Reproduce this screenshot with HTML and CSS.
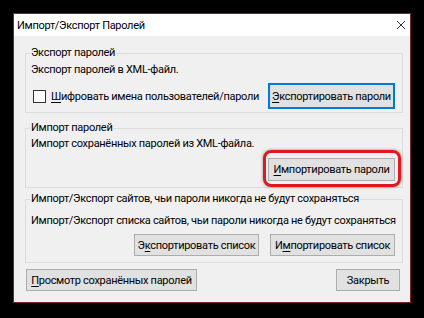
FILE: index.html
```html
<!DOCTYPE html>
<html lang="ru">
<head>
  <meta charset="UTF-8">
  <title>Импорт/Экспорт Паролей</title>
  <link rel="stylesheet" href="styles.css">
</head>
<body>
  <div class="window">
    <div class="titlebar">
      <span class="title">Импорт/Экспорт Паролей</span>
      <svg class="close" width="10" height="10" viewBox="0 0 10 10">
        <path d="M1 1 L9 9 M9 1 L1 9" stroke="#333" stroke-width="1" fill="none"/>
      </svg>
    </div>

    <div class="content">
      <fieldset class="group group-export">
        <legend>Экспорт паролей</legend>
        <p>Экспорт паролей в XML-файл.</p>
        <div class="row">
          <label class="check">
            <span class="box"></span>
            <span><u>Ш</u>ифровать имена пользователей/пароли</span>
          </label>
          <button class="btn btn-default"><u>Э</u>кспортировать пароли</button>
        </div>
      </fieldset>

      <fieldset class="group group-import">
        <legend>Импорт паролей</legend>
        <p>Импорт сохранённых паролей из XML-файла.</p>
        <div class="row row-end">
          <div class="marked">
            <button class="btn btn-wide"><u>И</u>мпортировать пароли</button>
          </div>
        </div>
      </fieldset>

      <fieldset class="group group-sites">
        <legend>Импорт/Экспорт сайтов, чьи пароли никогда не будут сохраняться</legend>
        <p>Импорт/Экспорт списка сайтов, чьи пароли никогда не будут сохраняться</p>
        <div class="row row-end">
          <button class="btn btn-list">Э<u>к</u>спортировать список</button>
          <button class="btn btn-list">И<u>м</u>портировать список</button>
        </div>
      </fieldset>

      <div class="footer">
        <button class="btn btn-saved"><u>П</u>росмотр сохранённых паролей</button>
        <button class="btn btn-close">Закрыть</button>
      </div>
    </div>
  </div>
</body>
</html>
```

FILE: styles.css
```css
:root {
  --frame: #7a2331;
  --face: #f0f0f0;
  --group-line: #dcdcdc;
  --btn-bg: #e1e1e1;
  --btn-line: #adadad;
  --focus: #0078d7;
  --mark: #e3161e;
}

* {
  box-sizing: border-box;
}

body {
  margin: 0;
  padding: 13px;
  background: #000;
  font-family: Roboto, "Noto Sans", sans-serif;
  font-size: 11px;
  letter-spacing: -0.3px;
  color: #000;
  white-space: nowrap;
}

.window {
  width: 398px;
  height: 290px;
  border: 1px solid var(--frame);
  background: var(--face);
}

.titlebar {
  height: 22px;
  background: #fff;
  display: flex;
  align-items: center;
  justify-content: space-between;
  padding: 0 4px 0 3px;
}

.content {
  padding: 9px 7px 0 11px;
}

.group {
  margin: 0;
  padding: 0 7px 3px 5px;
  border: 1px solid var(--group-line);
  min-width: 0;
}

.group legend {
  padding: 0 1px;
  margin-left: -1px;
  line-height: 16px;
}

.group p {
  margin: 0;
  line-height: 16px;
}

.group-export p {
  margin-top: 1px;
}

.group-export .row {
  margin-top: 5px;
}

.group-import {
  margin-top: 7px;
  padding-bottom: 6px;
}

.group-import .row {
  margin-top: 6px;
}

.group-sites {
  margin-top: 3px;
  padding-bottom: 6px;
}

.group-sites p {
  margin-top: 6px;
}

.group-sites .row {
  margin-top: 5px;
  gap: 11px;
}

.row {
  display: flex;
  align-items: center;
  justify-content: space-between;
}

.row-end {
  justify-content: flex-end;
}

.check {
  display: flex;
  align-items: center;
  gap: 5px;
  margin-left: 2px;
}

.box {
  width: 13px;
  height: 13px;
  border: 1px solid #333;
  background: #fff;
}

.btn {
  font: inherit;
  letter-spacing: inherit;
  color: #000;
  background: var(--btn-bg);
  border: 1px solid var(--btn-line);
  height: 22px;
  padding: 0;
  text-align: center;
}

.btn u,
.check u {
  text-decoration-thickness: 1px;
  text-underline-offset: 2px;
}

.btn-default {
  width: 127px;
  height: 26px;
  border: 2px solid var(--focus);
}

.btn-wide {
  width: 127px;
  height: 23px;
}

.btn-list {
  width: 125px;
}

.marked {
  position: relative;
}

.marked::after {
  content: "";
  position: absolute;
  top: -8px;
  bottom: -6px;
  left: -5px;
  right: -6px;
  border: 3px solid var(--mark);
  border-radius: 8px;
  box-shadow: 0 0 3px rgba(0, 0, 0, 0.45), inset 0 0 2px rgba(255, 255, 255, 0.9);
}

.footer {
  display: flex;
  justify-content: space-between;
  margin-top: 6px;
  padding: 0 3px 0 1px;
}

.btn-saved {
  width: 171px;
}

.btn-close {
  width: 64px;
}
```
